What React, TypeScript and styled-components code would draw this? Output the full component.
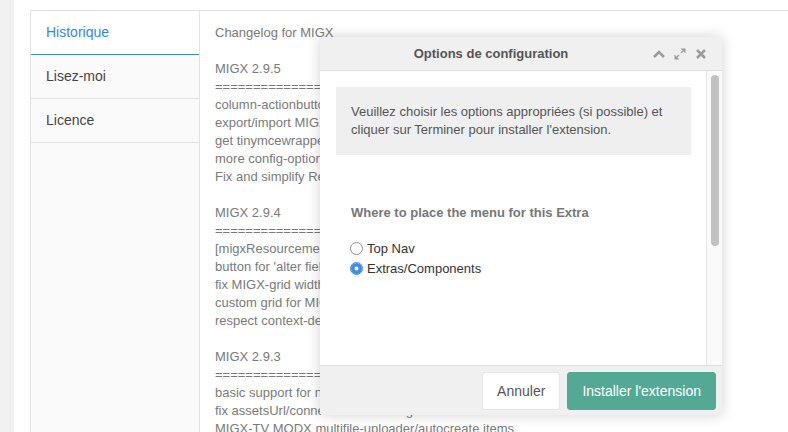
import React from 'react';
import styled, { createGlobalStyle } from 'styled-components';

const GlobalStyle = createGlobalStyle`
  html, body {
    margin: 0;
    padding: 0;
  }
  body {
    font-family: "Liberation Sans", Arial, Helvetica, sans-serif;
    background: #f1f1f1;
  }
`;

const Page = styled.div`
  position: relative;
  width: 788px;
  height: 432px;
  overflow: hidden;
  display: flex;
`;

const Gutter = styled.div`
  width: 14px;
  flex-shrink: 0;
  background: #f1f1f1;
`;

const Panel = styled.div`
  flex: 1;
  min-width: 0;
  display: flex;
  background: #fff;
  padding: 10px 0 0 16px;
`;

const TabsBox = styled.div`
  flex: 1;
  display: flex;
  border-top: 1px solid #e3e3e3;
  border-left: 1px solid #e3e3e3;
`;

const TabList = styled.div`
  width: 168px;
  flex-shrink: 0;
  background: #fafafa;
  border-right: 1px solid #e3e3e3;
`;

const Tab = styled.div<{ $active?: boolean }>`
  height: 43px;
  line-height: 43px;
  padding: 0 15px;
  font-size: 14px;
  color: ${p => (p.$active ? '#3a87d5' : '#444')};
  background: ${p => (p.$active ? '#fff' : '#fafafa')};
  border-bottom: 1px solid ${p => (p.$active ? '#3a87d5' : '#e3e3e3')};
`;

const Changelog = styled.div`
  flex: 1;
  padding: 13px 15px;
  font-size: 13px;
  line-height: 18px;
  color: #7a7a7a;
  white-space: pre;
`;

const LogLine = styled.div`
  min-height: 18px;
`;

const Modal = styled.div`
  position: absolute;
  left: 320px;
  top: 37px;
  width: 402px;
  height: 378px;
  display: flex;
  flex-direction: column;
  background: #fff;
  border-radius: 3px;
  overflow: hidden;
  box-shadow: 0 0 14px rgba(0, 0, 0, 0.18);
`;

const Header = styled.div`
  height: 33px;
  flex-shrink: 0;
  display: flex;
  align-items: center;
  padding: 0 14px 0 10px;
  background: #f0f0f0;
  border-bottom: 1px solid #dedede;
`;

const Title = styled.div`
  flex: 1;
  text-align: center;
  font-size: 13px;
  font-weight: bold;
  color: #555;
`;

const Tools = styled.div`
  display: flex;
  gap: 7px;
`;

const ToolIcon = styled.svg`
  display: block;
  width: 14px;
  height: 14px;
  color: #9c9c9c;
`;

const Body = styled.div`
  flex: 1;
  min-height: 0;
  display: flex;
`;

const BodyContent = styled.div`
  flex: 1;
  min-width: 0;
  overflow: hidden;
  padding: 16px 15px 0 16px;
`;

const ScrollTrack = styled.div`
  width: 16px;
  flex-shrink: 0;
  box-sizing: border-box;
  padding: 4px 3px 0 4px;
  background: #fafafa;
  border-left: 1px solid #e6e6e6;
`;

const ScrollThumb = styled.div`
  height: 171px;
  border-radius: 4px;
  background: #c2c2c2;
`;

const InfoBox = styled.div`
  background: #efefef;
  padding: 16px 15px;
  font-size: 13px;
  line-height: 18px;
  color: #555;
`;

const Fieldset = styled.div`
  padding: 49px 0 0 15px;
`;

const FieldLabel = styled.div`
  font-size: 13px;
  line-height: 18px;
  font-weight: bold;
  color: #777;
  margin-bottom: 16px;
`;

const RadioRow = styled.label`
  display: flex;
  align-items: center;
  gap: 4px;
  height: 20px;
  font-size: 13px;
  color: #333;
`;

const Radio = styled.input`
  appearance: none;
  width: 13px;
  height: 13px;
  margin: 0 0 0 -1px;
  border-radius: 50%;
  border: 1px solid #8d8d8d;
  background: #fff;
  &:checked {
    border-color: #3a8cf5;
    box-shadow: inset 0 0 0 3.5px #3a8cf5;
  }
`;

const Footer = styled.div`
  flex-shrink: 0;
  display: flex;
  justify-content: flex-end;
  gap: 7px;
  padding: 6px 6px 5px;
  background: #f0f0f0;
  border-top: 1px solid #dedede;
`;

const Button = styled.button<{ $primary?: boolean }>`
  height: 38px;
  padding: 0 14px;
  font: inherit;
  font-size: 14px;
  border-radius: 3px;
  cursor: pointer;
  color: ${p => (p.$primary ? '#fff' : '#555')};
  background: ${p => (p.$primary ? '#54a994' : '#fff')};
  border: 1px solid ${p => (p.$primary ? '#54a994' : '#e6e6e6')};
`;

const log = [
  'Changelog for MIGX',
  '',
  'MIGX 2.9.5',
  '==============================',
  'column-actionbuttons for grid-columns',
  'export/import MIGX-configs as files',
  'get tinymcewrapper working',
  'more config-options for richtext-editors',
  'Fix and simplify Resource ID detection',
  '',
  'MIGX 2.9.4',
  '==============================',
  '[migxResourcemediapath] allow different path',
  "button for 'alter field' in db-config",
  'fix MIGX-grid width in Revo 2.3',
  'custom grid for MIGX-configs',
  'respect context-default-media-source',
  '',
  'MIGX 2.9.3',
  '==============================',
  'basic support for new modx-media-browser',
  'fix assetsUrl/connectorUrl - settings',
  'MIGX-TV MODX multifile-uploader/autocreate items',
];

const App: React.FC = () => {
  return (
    <Page>
      <GlobalStyle />
      <Gutter />
      <Panel>
        <TabsBox>
          <TabList>
            <Tab $active>Historique</Tab>
            <Tab>Lisez-moi</Tab>
            <Tab>Licence</Tab>
          </TabList>
          <Changelog>
            {log.map((line, i) => (
              <LogLine key={i}>{line}</LogLine>
            ))}
          </Changelog>
        </TabsBox>
      </Panel>

      <Modal>
        <Header>
          <Title>Options de configuration</Title>
          <Tools>
            <ToolIcon viewBox="0 0 14 14">
              <polyline points="2,10 7,5 12,10" fill="none" stroke="currentColor" strokeWidth="2.6" />
            </ToolIcon>
            <ToolIcon viewBox="0 0 14 14">
              <polygon points="7.5,1.5 12.5,1.5 12.5,6.5" fill="currentColor" />
              <polygon points="1.5,7.5 1.5,12.5 6.5,12.5" fill="currentColor" />
              <line x1="10" y1="4" x2="8" y2="6" stroke="currentColor" strokeWidth="1.3" />
              <line x1="4" y1="10" x2="6" y2="8" stroke="currentColor" strokeWidth="1.3" />
            </ToolIcon>
            <ToolIcon viewBox="0 0 14 14">
              <path d="M3 3 L11 11 M11 3 L3 11" stroke="currentColor" strokeWidth="2.6" />
            </ToolIcon>
          </Tools>
        </Header>
        <Body>
          <BodyContent>
            <InfoBox>
              Veuillez choisir les options appropriées (si possible) et
              <br />
              cliquer sur Terminer pour installer l'extension.
            </InfoBox>
            <Fieldset>
              <FieldLabel>Where to place the menu for this Extra</FieldLabel>
              <RadioRow>
                <Radio type="radio" name="menu" />
                Top Nav
              </RadioRow>
              <RadioRow>
                <Radio type="radio" name="menu" defaultChecked />
                Extras/Components
              </RadioRow>
            </Fieldset>
          </BodyContent>
          <ScrollTrack>
            <ScrollThumb />
          </ScrollTrack>
        </Body>
        <Footer>
          <Button>Annuler</Button>
          <Button $primary>Installer l'extension</Button>
        </Footer>
      </Modal>
    </Page>
  );
};

export default App;
